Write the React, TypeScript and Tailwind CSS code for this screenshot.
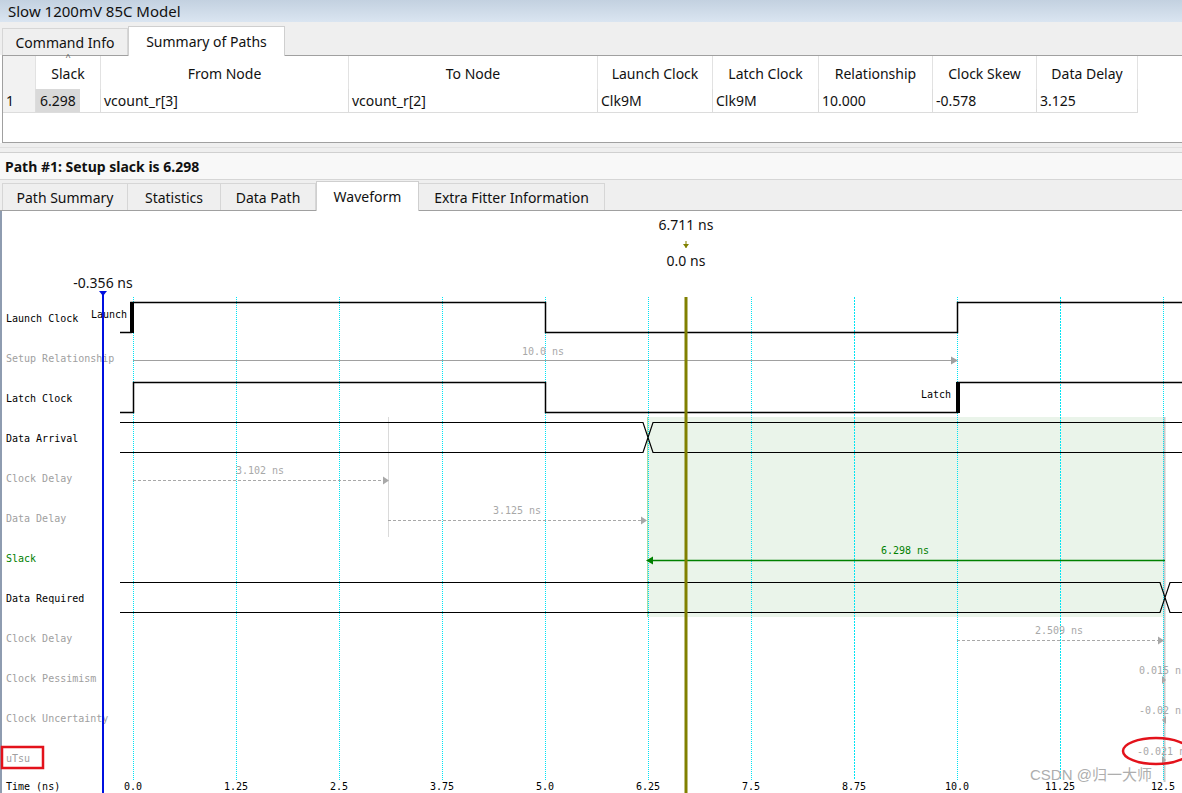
import React from "react";

const ui = "font-['Noto_Sans',_'Open_Sans',_sans-serif]";
const mono = "'DejaVu Sans Mono', 'Liberation Mono', monospace";

const x0 = 133;
const pxPerNs = 82.4;
const xt = (t: number) => Math.round(x0 + pxPerNs * t);

const ticks = [0, 1.25, 2.5, 3.75, 5, 6.25, 7.5, 8.75, 10, 11.25, 12.5];
const tickLabel = (t: number) => (Number.isInteger(t) ? t.toFixed(1) : String(t));

const rows = [
  { label: "Launch Clock", color: "#000" },
  { label: "Setup Relationship", color: "#a0a0a0" },
  { label: "Latch Clock", color: "#000" },
  { label: "Data Arrival", color: "#000" },
  { label: "Clock Delay", color: "#a0a0a0" },
  { label: "Data Delay", color: "#a0a0a0" },
  { label: "Slack", color: "#008000" },
  { label: "Data Required", color: "#000" },
  { label: "Clock Delay", color: "#a0a0a0" },
  { label: "Clock Pessimism", color: "#a0a0a0" },
  { label: "Clock Uncertainty", color: "#a0a0a0" },
  { label: "uTsu", color: "#a0a0a0" },
];

const columns = [
  { name: "", w: "w-[33px]" },
  { name: "Slack", w: "w-[65px]" },
  { name: "From Node", w: "w-[248px]" },
  { name: "To Node", w: "w-[249px]" },
  { name: "Launch Clock", w: "w-[115px]" },
  { name: "Latch Clock", w: "w-[106px]" },
  { name: "Relationship", w: "w-[114px]" },
  { name: "Clock Skew", w: "w-[104px]" },
  { name: "Data Delay", w: "w-[101px]" },
];

const values = ["1", "6.298", "vcount_r[3]", "vcount_r[2]", "Clk9M", "Clk9M", "10.000", "-0.578", "3.125"];

function Tab({ label, active, w }: { label: string; active?: boolean; w: string }) {
  return (
    <div
      className={
        active
          ? `${w} h-[30px] -mb-px flex items-center justify-center bg-white border border-b-0 border-[#cfcfcf] text-[#111]`
          : `${w} h-[27px] flex items-center justify-center bg-[#efefef] border border-b-0 border-l-0 border-[#d6d6d6] first:border-l text-[#111]`
      }
    >
      {label}
    </div>
  );
}

function Waveform() {
  const gray = "#a8a8a8";
  return (
    <svg width={1182} height={582} viewBox="0 211 1182 582" className="block">
      {/* shaded slack window */}
      <rect x={647} y={417} width={518} height={200} fill="#eaf4ea" />
      <line x1={647.5} y1={417} x2={647.5} y2={617} stroke="#a6dea6" />
      <line x1={1164.5} y1={417} x2={1164.5} y2={782} stroke="#c8c8c8" strokeWidth={2} />
      <line x1={388.5} y1={417} x2={388.5} y2={537} stroke="#dadada" />

      {/* grid */}
      {ticks.map((t) => (
        <line
          key={t}
          x1={xt(t) + 0.5}
          y1={297}
          x2={xt(t) + 0.5}
          y2={780}
          stroke="#00e4f4"
          strokeDasharray={t === 8.75 || t === 11.25 ? "2 1" : "1 1"}
        />
      ))}

      {/* labels */}
      {rows.map((r, i) => (
        <text key={i} x={6} y={322 + i * 40} fontFamily={mono} fontSize={10} fill={r.color}>
          {r.label}
        </text>
      ))}
      <text x={6} y={790} fontFamily={mono} fontSize={10} fill="#000">
        Time (ns)
      </text>
      {ticks.map((t) => (
        <text key={t} x={xt(t)} y={790} textAnchor="middle" fontFamily={mono} fontSize={10} fill="#000">
          {tickLabel(t)}
        </text>
      ))}

      {/* launch clock */}
      <path d="M120 332.5 H131 V302.5 H545.5 V332.5 H957.5 V302.5 H1182" fill="none" stroke="#000" strokeWidth={1.5} />
      <rect x={130} y={302} width={4} height={31} fill="#000" />
      <text x={127} y={318} textAnchor="end" fontFamily={mono} fontSize={10} fill="#000">
        Launch
      </text>

      {/* setup relationship */}
      <line x1={133} y1={360.5} x2={953} y2={360.5} stroke="#a0a0a0" />
      <polygon points="951,356.5 958,360.5 951,364.5" fill="#a0a0a0" />
      <text x={543} y={355} textAnchor="middle" fontFamily={mono} fontSize={10} fill="#a8a8a8">
        10.0 ns
      </text>

      {/* latch clock */}
      <path d="M120 412.5 H133.5 V382.5 H545.5 V412.5 H957.5 V382.5 H1182" fill="none" stroke="#000" strokeWidth={1.5} />
      <rect x={956} y={382} width={4} height={31} fill="#000" />
      <text x={951} y={398} textAnchor="end" fontFamily={mono} fontSize={10} fill="#000">
        Latch
      </text>

      {/* data arrival */}
      <path d="M120 422.5 H643 L653 452.5 H1182 M120 452.5 H643 L653 422.5 H1182" fill="none" stroke="#000" strokeWidth={1.2} />

      {/* clock delay */}
      <line x1={133} y1={480.5} x2={384} y2={480.5} stroke={gray} strokeDasharray="3 2" />
      <polygon points="383,476.5 389,480.5 383,484.5" fill={gray} />
      <text x={260} y={474} textAnchor="middle" fontFamily={mono} fontSize={10} fill={gray}>
        3.102 ns
      </text>

      {/* data delay */}
      <line x1={388} y1={520.5} x2={642} y2={520.5} stroke={gray} strokeDasharray="3 2" />
      <polygon points="641,516.5 647,520.5 641,524.5" fill={gray} />
      <text x={517} y={514} textAnchor="middle" fontFamily={mono} fontSize={10} fill={gray}>
        3.125 ns
      </text>

      {/* slack */}
      <line x1={652} y1={560.5} x2={1165} y2={560.5} stroke="#008000" strokeWidth={1.5} />
      <polygon points="653,556.5 646,560.5 653,564.5" fill="#008000" />
      <text x={905} y={554} textAnchor="middle" fontFamily={mono} fontSize={10} fill="#008000">
        6.298 ns
      </text>

      {/* data required */}
      <path d="M120 582.5 H1160 L1170 612.5 H1182 M120 612.5 H1160 L1170 582.5 H1182" fill="none" stroke="#000" strokeWidth={1.2} />

      {/* clock delay 2 */}
      <line x1={957} y1={640.5} x2={1158} y2={640.5} stroke={gray} strokeDasharray="3 2" />
      <polygon points="1158,636.5 1164,640.5 1158,644.5" fill={gray} />
      <text x={1059} y={634} textAnchor="middle" fontFamily={mono} fontSize={10} fill={gray}>
        2.509 ns
      </text>

      {/* pessimism / uncertainty / uTsu */}
      <text x={1139} y={674} fontFamily={mono} fontSize={10} fill={gray}>
        0.015 ns
      </text>
      <polygon points="1162,676 1166,680 1162,684" fill={gray} />
      <text x={1139} y={714} fontFamily={mono} fontSize={10} fill={gray}>
        -0.02 ns
      </text>
      <polygon points="1166,716 1162,720 1166,724" fill={gray} />
      <text x={1137} y={755} fontFamily={mono} fontSize={10} fill={gray}>
        -0.021 ns
      </text>
      <polygon points="1162,756 1166,760 1162,764" fill={gray} />

      {/* markers */}
      <line x1={686} y1={297} x2={686} y2={793} stroke="#808000" strokeWidth={3} />
      <line x1={686} y1={241} x2={686} y2={248} stroke="#808000" />
      <polygon points="683,244 689,244 686,248" fill="#808000" />
      <text x={686} y={230} textAnchor="middle" fontFamily="'Noto Sans', sans-serif" fontSize={14} fill="#111">
        6.711 ns
      </text>
      <text x={686} y={266} textAnchor="middle" fontFamily="'Noto Sans', sans-serif" fontSize={14} fill="#111">
        0.0 ns
      </text>
      <line x1={103} y1={293} x2={103} y2={793} stroke="#0010e0" strokeWidth={2} />
      <polygon points="99,291 107,291 103,296" fill="#0010e0" />
      <text x={103} y={288} textAnchor="middle" fontFamily="'Noto Sans', sans-serif" fontSize={14} fill="#111">
        -0.356 ns
      </text>

      {/* annotations */}
      <rect x={2} y={747} width={41} height={21} fill="none" stroke="#e3121b" strokeWidth={2.5} />
      <ellipse cx={1156} cy={751} rx={33} ry={13} fill="none" stroke="#e3121b" strokeWidth={2.5} />
      <text
        x={1030}
        y={780}
        fontFamily="'Liberation Sans', 'Noto Sans CJK SC', sans-serif"
        fontSize={15}
        fill="#9a9a9a"
        opacity={0.8}
      >
        CSDN @归一大师
      </text>
    </svg>
  );
}

export default function App() {
  return (
    <div className={`w-[1182px] h-[793px] overflow-hidden bg-white text-[14px] text-[#111] ${ui}`}>
      <div className="h-[22px] flex items-center px-2 text-[15px] bg-gradient-to-b from-[#c3d1e0] to-[#dae5f1]">
        Slow 1200mV 85C Model
      </div>

      <div className="h-[33px] flex items-end pl-[2px] bg-[#efefef]">
        <Tab label="Command Info" w="w-[126px]" />
        <Tab label="Summary of Paths" w="w-[157px]" active />
      </div>

      <div className="h-[88px] ml-[2px] border-t border-b border-l border-[#a0a0a0] bg-white">
        <div className="flex h-[33px]">
          {columns.map((c, i) => (
            <div
              key={i}
              className={`${c.w} relative flex items-end justify-center pb-[5px] border-r border-[#e2e2e2] ${i === 0 ? "bg-[#f2f2f2]" : ""}`}
            >
              {i === 1 && (
                <span className="absolute top-[-5px] left-1/2 -translate-x-1/2 text-[9px] leading-[12px] text-[#555]">^</span>
              )}
              {c.name}
            </div>
          ))}
        </div>
        <div className="flex h-[24px]">
          {columns.map((c, i) => (
            <div key={i} className={`${c.w} flex items-center border-r border-b border-[#dcdcdc] ${i === 0 ? "bg-[#f2f2f2]" : ""}`}>
              <span className={i === 1 ? "h-full flex items-center bg-[#d9d9d9] px-[4px]" : "px-[3px]"}>{values[i]}</span>
            </div>
          ))}
        </div>
      </div>

      <div className="h-[10px] bg-[#efefef] border-b border-[#d0d0d0] flex flex-col justify-center">
        <div className="h-px bg-[#e0e0e0]" />
      </div>

      <div className="h-[27px] flex items-center px-[5px] bg-[#f8f8f8] border-b border-[#d6d6d6] font-bold">
        Path #1: Setup slack is 6.298
      </div>

      <div className="h-[31px] flex items-end pl-[2px] bg-[#efefef] border-b border-[#a0a0a0]">
        <Tab label="Path Summary" w="w-[126px]" />
        <Tab label="Statistics" w="w-[93px]" />
        <Tab label="Data Path" w="w-[95px]" />
        <Tab label="Waveform" w="w-[103px]" active />
        <Tab label="Extra Fitter Information" w="w-[186px]" />
      </div>

      <div className="relative border-l-2 border-[#8e9cb0]">
        <div className="-ml-[2px]">
          <Waveform />
        </div>
      </div>
    </div>
  );
}
